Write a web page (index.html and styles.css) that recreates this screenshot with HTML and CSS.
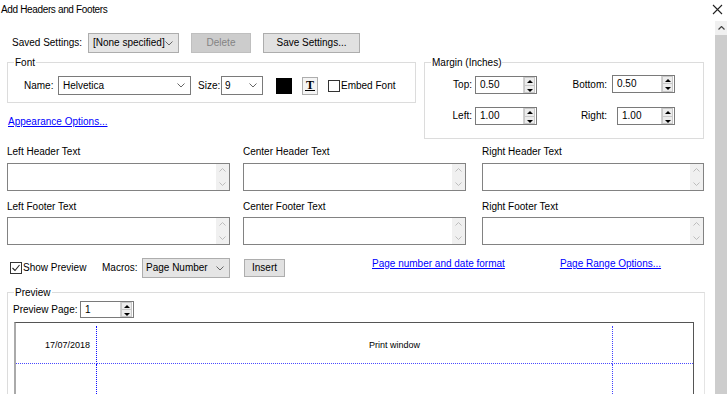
FILE: index.html
```html
<!DOCTYPE html>
<html>
<head>
<meta charset="utf-8">
<link rel="stylesheet" href="styles.css">
</head>
<body>
<div class="window">
  <div class="titlebar">
    <span class="title">Add Headers and Footers</span>
    <svg class="close" width="11" height="11" viewBox="0 0 11 11"><path d="M1 1L10 10M10 1L1 10" stroke="#222" stroke-width="1.1" fill="none"/></svg>
  </div>

  <div class="content">
    <div class="row-saved">
      <span class="lbl-saved">Saved Settings:</span>
      <div class="dd dd-grey dd-saved"><span>[None specified]</span><svg class="chev" width="8" height="5" viewBox="0 0 8 5"><path d="M0.5 0.5L4 4L7.5 0.5" stroke="#666" fill="none"/></svg></div>
      <div class="btn btn-disabled btn-delete">Delete</div>
      <div class="btn btn-save">Save Settings...</div>
    </div>

    <div class="row-groups">
      <div class="col-left">
        <div class="group group-font">
          <span class="legend">Font</span>
          <div class="font-row">
            <span class="lbl-name">Name:</span>
            <div class="dd dd-white dd-name"><span>Helvetica</span><svg class="chev" width="8" height="5" viewBox="0 0 8 5"><path d="M0.5 0.5L4 4L7.5 0.5" stroke="#666" fill="none"/></svg></div>
            <span class="lbl-size">Size:</span>
            <div class="dd dd-white dd-size"><span>9</span><svg class="chev" width="8" height="5" viewBox="0 0 8 5"><path d="M0.5 0.5L4 4L7.5 0.5" stroke="#666" fill="none"/></svg></div>
            <span class="swatch"></span>
            <span class="tbtn"><span class="tglyph">T</span></span>
            <span class="cb"></span>
            <span class="lbl-embed">Embed Font</span>
          </div>
        </div>
        <a class="link link-appearance">Appearance Options...</a>
      </div>

      <div class="group group-margin">
        <span class="legend">Margin (Inches)</span>
        <div class="margin-grid">
          <span class="mlbl">Top:</span>
          <div class="spin"><span class="val">0.50</span><span class="arrows"><i class="up"></i><i class="dn"></i></span></div>
          <span class="mlbl">Bottom:</span>
          <div class="spin spin-shift"><span class="val">0.50</span><span class="arrows"><i class="up"></i><i class="dn"></i></span></div>
          <span class="mlbl">Left:</span>
          <div class="spin"><span class="val">1.00</span><span class="arrows"><i class="up"></i><i class="dn"></i></span></div>
          <span class="mlbl">Right:</span>
          <div class="spin spin-narrow"><span class="val">1.00</span><span class="arrows"><i class="up"></i><i class="dn"></i></span></div>
        </div>
      </div>
    </div>

    <div class="text-grid">
      <div class="tcell"><div class="tlbl">Left Header Text</div><div class="ta"><div class="ta-scroll"><svg width="7" height="4" viewBox="0 0 7 4"><path d="M0.5 3.5L3.5 0.5L6.5 3.5" stroke="#bdbdbd" fill="none"/></svg><svg width="7" height="4" viewBox="0 0 7 4"><path d="M0.5 0.5L3.5 3.5L6.5 0.5" stroke="#bdbdbd" fill="none"/></svg></div></div></div>
      <div class="tcell"><div class="tlbl">Center Header Text</div><div class="ta"><div class="ta-scroll"><svg width="7" height="4" viewBox="0 0 7 4"><path d="M0.5 3.5L3.5 0.5L6.5 3.5" stroke="#bdbdbd" fill="none"/></svg><svg width="7" height="4" viewBox="0 0 7 4"><path d="M0.5 0.5L3.5 3.5L6.5 0.5" stroke="#bdbdbd" fill="none"/></svg></div></div></div>
      <div class="tcell"><div class="tlbl">Right Header Text</div><div class="ta ta-r"><div class="ta-scroll"><svg width="7" height="4" viewBox="0 0 7 4"><path d="M0.5 3.5L3.5 0.5L6.5 3.5" stroke="#bdbdbd" fill="none"/></svg><svg width="7" height="4" viewBox="0 0 7 4"><path d="M0.5 0.5L3.5 3.5L6.5 0.5" stroke="#bdbdbd" fill="none"/></svg></div></div></div>
      <div class="tcell tcell-foot"><div class="tlbl">Left Footer Text</div><div class="ta"><div class="ta-scroll"><svg width="7" height="4" viewBox="0 0 7 4"><path d="M0.5 3.5L3.5 0.5L6.5 3.5" stroke="#bdbdbd" fill="none"/></svg><svg width="7" height="4" viewBox="0 0 7 4"><path d="M0.5 0.5L3.5 3.5L6.5 0.5" stroke="#bdbdbd" fill="none"/></svg></div></div></div>
      <div class="tcell tcell-foot"><div class="tlbl">Center Footer Text</div><div class="ta"><div class="ta-scroll"><svg width="7" height="4" viewBox="0 0 7 4"><path d="M0.5 3.5L3.5 0.5L6.5 3.5" stroke="#bdbdbd" fill="none"/></svg><svg width="7" height="4" viewBox="0 0 7 4"><path d="M0.5 0.5L3.5 3.5L6.5 0.5" stroke="#bdbdbd" fill="none"/></svg></div></div></div>
      <div class="tcell tcell-foot"><div class="tlbl">Right Footer Text</div><div class="ta ta-r"><div class="ta-scroll"><svg width="7" height="4" viewBox="0 0 7 4"><path d="M0.5 3.5L3.5 0.5L6.5 3.5" stroke="#bdbdbd" fill="none"/></svg><svg width="7" height="4" viewBox="0 0 7 4"><path d="M0.5 0.5L3.5 3.5L6.5 0.5" stroke="#bdbdbd" fill="none"/></svg></div></div></div>
    </div>

    <div class="row-preview-opts">
      <span class="cb cb-checked"><svg width="10" height="10" viewBox="0 0 10 10"><path d="M1.5 5L4 7.5L8.5 2" stroke="#222" stroke-width="1.1" fill="none"/></svg></span>
      <span class="lbl-show">Show Preview</span>
      <span class="lbl-macros">Macros:</span>
      <div class="dd dd-grey dd-macros"><span>Page Number</span><svg class="chev" width="8" height="5" viewBox="0 0 8 5"><path d="M0.5 0.5L4 4L7.5 0.5" stroke="#666" fill="none"/></svg></div>
      <div class="btn btn-insert">Insert</div>
      <a class="link link-pnd">Page number and date format</a>
      <a class="link link-pr">Page Range Options...</a>
    </div>

    <div class="group group-preview">
      <span class="legend">Preview</span>
      <div class="pp-row">
        <span class="lbl-pp">Preview Page:</span>
        <div class="spin spin-pp"><span class="val">1</span><span class="arrows"><i class="up"></i><i class="dn"></i></span></div>
      </div>
      <div class="page">
        <div class="pg c1 r1 date">17/07/2018</div>
        <div class="pg c2 r1 center">Print window</div>
        <div class="pg c3 r1"></div>
        <div class="pg c1"></div>
        <div class="pg c2"></div>
        <div class="pg c3"></div>
      </div>
    </div>
  </div>

  <div class="scrollbar">
    <div class="sb-up"><svg width="7" height="4" viewBox="0 0 7 4"><path d="M0.5 3.5L3.5 0.5L6.5 3.5" stroke="#444" stroke-width="1.2" fill="none"/></svg></div>
    <div class="sb-thumb"></div>
  </div>
</div>
</body>
</html>
```

FILE: styles.css
```css
* { box-sizing: border-box; }
body {
  margin: 0;
  background: #fff;
  color: #000;
  font-family: "Liberation Sans", Arial, sans-serif;
  font-size: 10px;
  line-height: 12px;
}
.window {
  width: 727px;
  height: 394px;
  overflow: hidden;
  display: grid;
  grid-template-columns: 715px 12px;
  grid-template-rows: 21px 373px;
}
.titlebar {
  grid-column: 1 / 3;
  display: flex;
  justify-content: space-between;
  align-items: flex-start;
  padding: 3px 4px 0 1px;
}
.title { letter-spacing: -0.35px; line-height: 13px; }
.close { margin-top: 1px; }

.content { padding-left: 7px; overflow: hidden; }

/* Generic controls */
.dd {
  display: flex;
  align-items: center;
  justify-content: space-between;
  height: 20px;
  padding: 0 5px 0 4px;
}
.dd-grey { background: #e5e5e5; border: 1px solid #adadad; }
.dd-white { background: #fff; border: 1px solid #7a7a7a; }
.chev { flex: none; }
.btn {
  display: flex;
  align-items: center;
  justify-content: center;
  height: 20px;
  background: #e1e1e1;
  border: 1px solid #adadad;
}
.btn-disabled { background: #cccccc; border-color: #bfbfbf; color: #838383; }
.link { color: #0000ff; text-decoration: underline; }

/* Row 1 */
.row-saved {
  display: flex;
  align-items: center;
  height: 20px;
  margin-top: 12px;
  padding-left: 5px;
}
.lbl-saved { width: 76px; }
.dd-saved { width: 91px; }
.btn-delete { width: 60px; margin-left: 12px; }
.btn-save { width: 97px; margin-left: 12px; }

/* Groups */
.row-groups { display: flex; align-items: flex-start; margin-top: 9px; }
.group { position: relative; border: 1px solid #dcdcdc; }
.legend {
  position: absolute;
  top: -7px;
  left: 6px;
  padding: 0 1px;
  background: #fff;
  line-height: 13px;
}
.col-left { width: 409px; display: flex; flex-direction: column; align-items: flex-start; }
.group-font { width: 409px; height: 41px; padding: 13px 0 0 16px; }
.font-row { display: flex; align-items: center; height: 19px; }
.lbl-name { width: 34px; }
.dd-name { width: 133px; height: 19px; }
.lbl-size { margin-left: 7px; width: 23px; }
.dd-size { width: 42px; height: 19px; padding-left: 3px; }
.swatch { width: 16px; height: 16px; background: #000; margin-left: 13px; }
.tbtn {
  width: 16px;
  height: 18px;
  margin-left: 10px;
  border: 1px solid #adadad;
  background: #f4f4f4;
  display: flex;
  align-items: center;
  justify-content: center;
}
.tglyph {
  font-family: "Liberation Serif", "Times New Roman", serif;
  font-size: 12px;
  line-height: 10px;
  font-weight: bold;
  border-bottom: 1px solid #000;
  padding: 0 1px;
}
.cb {
  width: 12px;
  height: 12px;
  border: 1px solid #333;
  background: #fff;
  margin-left: 10px;
  display: flex;
  align-items: center;
  justify-content: center;
  flex: none;
}
.lbl-embed { margin-left: 1px; }
.link-appearance { margin-top: 12px; margin-left: 1px; line-height: 13px; }

.group-margin { width: 280px; height: 77px; margin-left: 8px; padding: 13px 0 0 3px; }
.margin-grid {
  display: grid;
  grid-template-columns: 47px 62px 75px 63px;
  grid-template-rows: 18px 18px;
  row-gap: 13px;
  align-items: center;
}
.mlbl { text-align: right; padding-right: 3px; }
.margin-grid .mlbl:nth-child(3), .margin-grid .mlbl:nth-child(7) { padding-right: 5px; }
.spin {
  display: flex;
  height: 18px;
  border: 1px solid #7a7a7a;
  background: #fff;
}
.spin-shift { margin-top: -3px; }
.spin-narrow { width: 58px; justify-self: end; }
.val { flex: 1; padding-left: 4px; line-height: 16px; }
.arrows {
  width: 12px;
  margin: 0 1px 0 0;
  display: flex;
  flex-direction: column;
  border-left: 1px solid #d0d0d0;
}
.arrows i {
  flex: 1;
  background: #ececec;
  border: 1px solid #c8c8c8;
  position: relative;
}
.arrows i.up { border-bottom: none; }
.arrows i::after {
  content: "";
  position: absolute;
  left: 2px;
  top: 2px;
  border-left: 3px solid transparent;
  border-right: 3px solid transparent;
}
.arrows i.up::after { border-bottom: 3px solid #000; }
.arrows i.dn::after { border-top: 3px solid #000; top: 3px; }

/* Text grid */
.text-grid {
  display: grid;
  grid-template-columns: 236px 239px 222px;
  margin-top: 6px;
}
.tlbl { line-height: 13px; height: 13px; margin-bottom: 5px; }
.tcell-foot { margin-top: 9px; }
.tcell-foot .tlbl { margin-bottom: 4px; }
.ta {
  width: 223px;
  height: 28px;
  border: 1px solid #828282;
  display: flex;
  justify-content: flex-end;
}
.ta-r { width: 222px; }
.ta-scroll {
  width: 13px;
  background: #f0f0f0;
  display: flex;
  flex-direction: column;
  align-items: center;
  justify-content: space-between;
  padding: 4px 0 4px;
}

/* Preview options row */
.row-preview-opts {
  display: flex;
  align-items: center;
  height: 20px;
  margin-top: 13px;
  padding-left: 3px;
}
.row-preview-opts .cb { margin-left: 0; }
.lbl-show { margin-left: 1px; width: 79px; }
.lbl-macros { width: 40px; }
.dd-macros { width: 88px; padding-left: 3px; }
.btn-insert { width: 41px; height: 18px; margin-left: 14px; }
.link-pnd { margin-left: 87px; align-self: flex-start; margin-top: 0; }
.link-pr { margin-left: 55px; align-self: flex-start; }

/* Preview group */
.group-preview {
  width: 698px;
  height: 200px;
  margin-top: 14px;
  padding: 8px 0 0 5px;
  border-right-color: #e4e4e4;
}
.pp-row { display: flex; align-items: center; height: 17px; }
.lbl-pp { width: 67px; }
.spin-pp { width: 54px; height: 17px; }
.page {
  margin: 4px 0 0 1px;
  width: 680px;
  height: 120px;
  border-top: 1px solid #555;
  border-right: 1px solid #555;
  border-left: 2px solid #aaa;
  padding-top: 3px;
  display: grid;
  grid-template-columns: 81px 515px 1fr;
  grid-template-rows: 38px 1fr;
  font-size: 9px;
}
.pg { display: flex; align-items: center; }
.r1 { border-bottom: 1px dotted #4a4aff; }
.c1 { border-right: 1px dotted #1010ff; }
.c3 { border-left: 1px dotted #4040ff; }
.date { justify-content: flex-end; padding-right: 6px; }
.center { padding-left: 272px; }

/* Scrollbar */
.scrollbar { display: flex; flex-direction: column; background: #cdcdcd; }
.sb-up {
  height: 14px;
  background: #f0f0f0;
  display: flex;
  align-items: center;
  justify-content: center;
}
.sb-thumb { flex: 1; background: #cdcdcd; }
```
